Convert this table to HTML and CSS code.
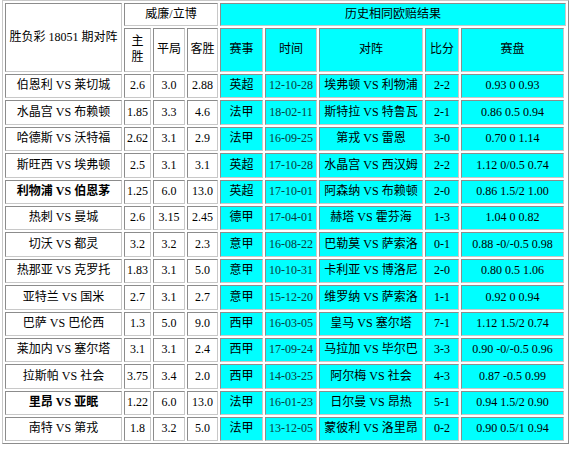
FILE: index.html
```html
<!DOCTYPE html>
<html lang="zh-CN">
<head>
    <meta charset="UTF-8">
    <title>胜负彩 18051 期对阵</title>
    <link rel="stylesheet" href="styles.css">
</head>
<body>
    <table class="odds">
        <colgroup>
            <col class="c-match">
            <col class="c-win">
            <col class="c-draw">
            <col class="c-lose">
            <col class="c-league">
            <col class="c-date">
            <col class="c-his">
            <col class="c-score">
            <col class="c-pan">
        </colgroup>
        <tr class="head1">
            <td rowspan="2">胜负彩 18051 期对阵</td>
            <td colspan="3">威廉/立博</td>
            <td colspan="6" class="hl">历史相同欧赔结果</td>
        </tr>
        <tr class="head2">
            <td>主胜</td>
            <td>平局</td>
            <td>客胜</td>
            <td class="hl">赛事</td>
            <td class="hl">时间</td>
            <td class="hl">对阵</td>
            <td class="hl">比分</td>
            <td class="hl">赛盘</td>
        </tr>
        <tr>
            <td>伯恩利 VS 莱切城</td><td>2.6</td><td>3.0</td><td>2.88</td>
            <td class="hl">英超</td><td class="hl date">12-10-28</td><td class="hl">埃弗顿 VS 利物浦</td><td class="hl">2-2</td><td class="hl">0.93 0 0.93</td>
        </tr>
        <tr>
            <td>水晶宫 VS 布赖顿</td><td>1.85</td><td>3.3</td><td>4.6</td>
            <td class="hl">法甲</td><td class="hl date">18-02-11</td><td class="hl">斯特拉 VS 特鲁瓦</td><td class="hl">2-1</td><td class="hl">0.86 0.5 0.94</td>
        </tr>
        <tr>
            <td>哈德斯 VS 沃特福</td><td>2.62</td><td>3.1</td><td>2.9</td>
            <td class="hl">法甲</td><td class="hl date">16-09-25</td><td class="hl">第戎 VS 雷恩</td><td class="hl">3-0</td><td class="hl">0.70 0 1.14</td>
        </tr>
        <tr>
            <td>斯旺西 VS 埃弗顿</td><td>2.5</td><td>3.1</td><td>3.1</td>
            <td class="hl">英超</td><td class="hl date">17-10-28</td><td class="hl">水晶宫 VS 西汉姆</td><td class="hl">2-2</td><td class="hl">1.12 0/0.5 0.74</td>
        </tr>
        <tr>
            <td class="strong">利物浦 VS 伯恩茅</td><td>1.25</td><td>6.0</td><td>13.0</td>
            <td class="hl">英超</td><td class="hl date">17-10-01</td><td class="hl">阿森纳 VS 布赖顿</td><td class="hl">2-0</td><td class="hl">0.86 1.5/2 1.00</td>
        </tr>
        <tr>
            <td>热刺 VS 曼城</td><td>2.6</td><td>3.15</td><td>2.45</td>
            <td class="hl">德甲</td><td class="hl date">17-04-01</td><td class="hl">赫塔 VS 霍芬海</td><td class="hl">1-3</td><td class="hl">1.04 0 0.82</td>
        </tr>
        <tr>
            <td>切沃 VS 都灵</td><td>3.2</td><td>3.2</td><td>2.3</td>
            <td class="hl">意甲</td><td class="hl date">16-08-22</td><td class="hl">巴勒莫 VS 萨索洛</td><td class="hl">0-1</td><td class="hl">0.88 -0/-0.5 0.98</td>
        </tr>
        <tr>
            <td>热那亚 VS 克罗托</td><td>1.83</td><td>3.1</td><td>5.0</td>
            <td class="hl">意甲</td><td class="hl date">10-10-31</td><td class="hl">卡利亚 VS 博洛尼</td><td class="hl">2-0</td><td class="hl">0.80 0.5 1.06</td>
        </tr>
        <tr>
            <td>亚特兰 VS 国米</td><td>2.7</td><td>3.1</td><td>2.7</td>
            <td class="hl">意甲</td><td class="hl date">15-12-20</td><td class="hl">维罗纳 VS 萨索洛</td><td class="hl">1-1</td><td class="hl">0.92 0 0.94</td>
        </tr>
        <tr>
            <td>巴萨 VS 巴伦西</td><td>1.3</td><td>5.0</td><td>9.0</td>
            <td class="hl">西甲</td><td class="hl date">16-03-05</td><td class="hl">皇马 VS 塞尔塔</td><td class="hl">7-1</td><td class="hl">1.12 1.5/2 0.74</td>
        </tr>
        <tr>
            <td>莱加内 VS 塞尔塔</td><td>3.1</td><td>3.1</td><td>2.4</td>
            <td class="hl">西甲</td><td class="hl date">17-09-24</td><td class="hl">马拉加 VS 毕尔巴</td><td class="hl">3-3</td><td class="hl">0.90 -0/-0.5 0.96</td>
        </tr>
        <tr>
            <td>拉斯帕 VS 社会</td><td>3.75</td><td>3.4</td><td>2.0</td>
            <td class="hl">西甲</td><td class="hl date">14-03-25</td><td class="hl">阿尔梅 VS 社会</td><td class="hl">4-3</td><td class="hl">0.87 -0.5 0.99</td>
        </tr>
        <tr>
            <td class="strong">里昂 VS 亚眠</td><td>1.22</td><td>6.0</td><td>13.0</td>
            <td class="hl">法甲</td><td class="hl date">16-01-23</td><td class="hl">日尔曼 VS 昂热</td><td class="hl">5-1</td><td class="hl">0.94 1.5/2 0.90</td>
        </tr>
        <tr>
            <td>南特 VS 第戎</td><td>1.8</td><td>3.2</td><td>5.0</td>
            <td class="hl">法甲</td><td class="hl date">13-12-05</td><td class="hl">蒙彼利 VS 洛里昂</td><td class="hl">0-2</td><td class="hl">0.90 0.5/1 0.94</td>
        </tr>
    </table>
</body>
</html>
```

FILE: styles.css
```css
* {
    margin: 0;
    padding: 0;
}

body {
    background: #fff;
    color: #000;
    font-family: "Liberation Serif", "Noto Sans CJK SC", serif;
    font-size: 12px;
    line-height: 1.3;
}

.odds {
    margin-left: 2px;
    width: 565px;
    table-layout: fixed;
    border-collapse: separate;
    border-spacing: 2px;
    border: 1px solid;
    border-color: #c8c8c8 #8c8c8c #8c8c8c #c8c8c8;
}

.c-match  { width: 117px; }
.c-win    { width: 27px; }
.c-draw   { width: 32px; }
.c-lose   { width: 31px; }
.c-league { width: 43px; }
.c-date   { width: 52px; }
.c-his    { width: 104px; }
.c-score  { width: 34px; }
.c-pan    { width: 103px; }

.odds td {
    padding: 1px;
    border: 1px solid;
    border-color: #8c8c8c #c8c8c8 #c8c8c8 #8c8c8c;
    text-align: center;
    vertical-align: middle;
}

.odds tr { height: 24.4px; }
.odds tr.head1 { height: 23px; }
.odds tr.head2 { height: 44px; }

.odds td.hl {
    background: #00ffff;
}

.odds td.date {
    color: #0a4040;
}

.odds td.strong {
    font-weight: bold;
}
```
